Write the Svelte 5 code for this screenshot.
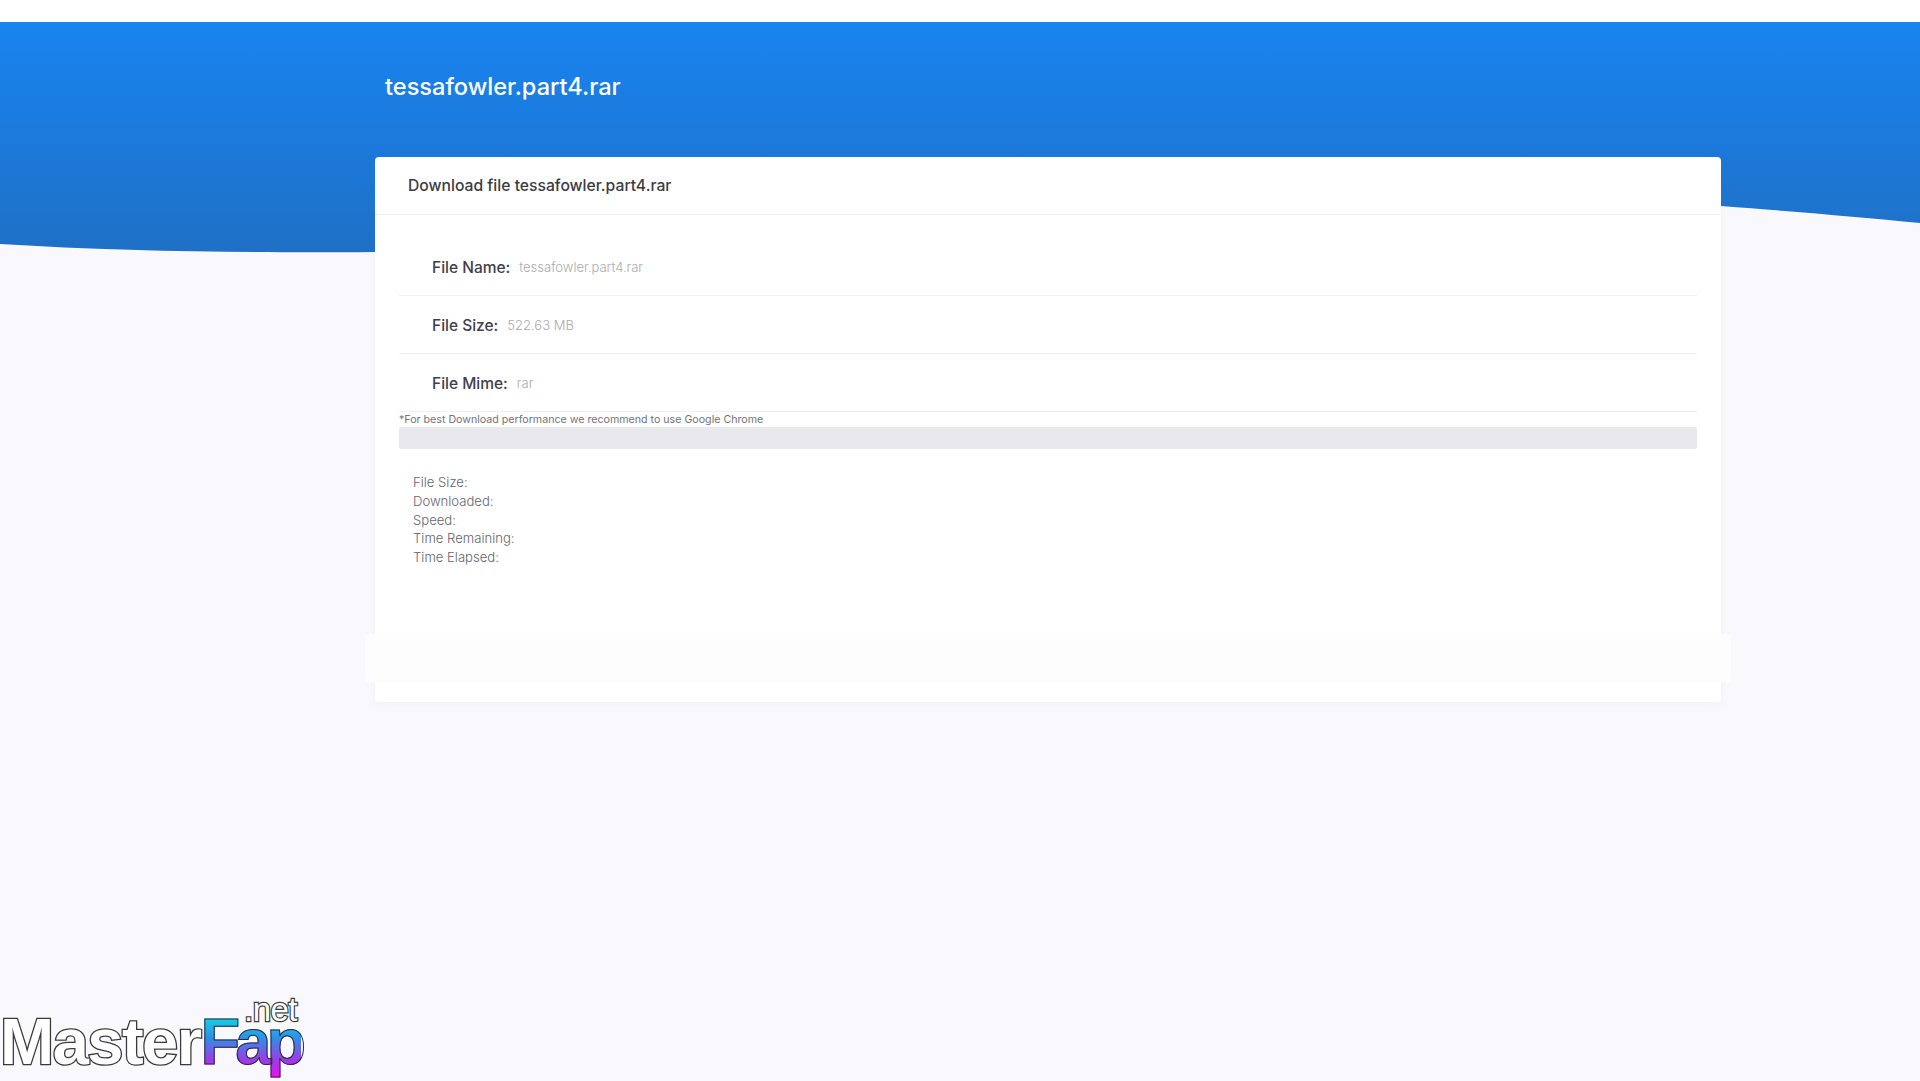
<script>
	const fileName = 'tessafowler.part4.rar';

	const details = [
		{ label: 'File Name:', value: fileName },
		{ label: 'File Size:', value: '522.63 MB' },
		{ label: 'File Mime:', value: 'rar' }
	];

	const stats = ['File Size:', 'Downloaded:', 'Speed:', 'Time Remaining:', 'Time Elapsed:'];
</script>

<div class="page">
	<div class="topbar"></div>

	<svg class="wave" viewBox="0 0 1920 240" preserveAspectRatio="none" aria-hidden="true">
		<defs>
			<linearGradient id="heroBlue" x1="0" y1="0" x2="0" y2="1">
				<stop offset="0" stop-color="#1884f0" />
				<stop offset="1" stop-color="#1f70c6" />
			</linearGradient>
		</defs>
		<path
			d="M0 222 C130 230 270 231 375 230 L1000 190 C1300 150 1560 172 1721 184 C1800 190 1860 195 1920 201 L1920 0 L0 0 Z"
			fill="url(#heroBlue)"
		/>
	</svg>

	<main class="content">
		<h1>{fileName}</h1>

		<section class="card">
			<header class="card-head">Download file {fileName}</header>

			<div class="card-body">
				{#each details as row (row.label)}
					<div class="detail">
						<span class="label">{row.label}</span>
						<span class="value">{row.value}</span>
					</div>
				{/each}

				<p class="note">*For best Download performance we recommend to use Google Chrome</p>
				<div class="progress"></div>

				<ul class="stats">
					{#each stats as stat (stat)}
						<li>{stat}</li>
					{/each}
				</ul>
			</div>

			<div class="strip"></div>
		</section>
	</main>

	<div class="logo">
		<span class="net">.net</span>
		<span class="master">Master</span><span class="fap">Fap</span>
	</div>
</div>

<style>
	:global(body) {
		background: #f9f8fd;
		font-family: 'Inter', 'Liberation Sans', sans-serif;
	}

	.page {
		position: relative;
		height: 1081px;
		overflow: hidden;
	}

	.topbar {
		height: 22px;
		background: #fff;
	}

	.wave {
		position: absolute;
		top: 22px;
		left: 0;
		width: 1920px;
		height: 240px;
	}

	.content {
		position: relative;
		padding: 0 199px 0 375px;
	}

	h1 {
		margin: 0;
		height: 135px;
		padding: 50px 0 0 10px;
		box-sizing: border-box;
		font-size: 23.6px;
		line-height: 30px;
		font-weight: 500;
		color: #fff;
	}

	.card {
		height: 545px;
		background: #fff;
		border-radius: 4px;
		box-shadow: 0 2px 12px rgba(120, 120, 170, 0.05);
		position: relative;
	}

	.card-head {
		height: 58px;
		padding-left: 33px;
		box-sizing: border-box;
		border-bottom: 1px solid #eeeef1;
		font-size: 15.7px;
		font-weight: 500;
		line-height: 58px;
		color: #3a3b44;
	}

	.card-body {
		padding: 23px 24px 0;
	}

	.detail {
		display: flex;
		align-items: center;
		gap: 9px;
		height: 58px;
		box-sizing: border-box;
		padding: 1px 0 0 33px;
		border-bottom: 1px solid #f0f0f3;
	}

	.label {
		font-size: 15.5px;
		font-weight: 500;
		color: #3f4049;
	}

	.value {
		font-size: 13px;
		font-weight: 300;
		color: #a9aab2;
	}

	.note {
		margin: 0;
		height: 15px;
		font-size: 10.65px;
		line-height: 15px;
		color: #72737c;
	}

	.progress {
		height: 22px;
		background: #e9e9ed;
		border-radius: 2px;
	}

	.stats {
		list-style: none;
		margin: 0;
		padding: 24px 0 0 14px;
		font-size: 13.1px;
		line-height: 18.8px;
		font-weight: 300;
		color: #64656e;
	}

	.strip {
		position: absolute;
		left: -10px;
		right: -10px;
		top: 477px;
		height: 48px;
		background: #fdfdfe;
		border-radius: 4px;
	}

	.logo {
		position: absolute;
		left: 0;
		bottom: 14px;
		font-family: 'Liberation Sans', sans-serif;
		font-weight: 700;
		font-size: 65px;
		line-height: 50px;
		letter-spacing: -1.5px;
		white-space: nowrap;
	}

	.master {
		color: #fff;
		-webkit-text-stroke: 2.6px #3a3a3a;
		paint-order: stroke fill;
	}

	.fap {
		letter-spacing: -5px;
		background: linear-gradient(180deg, #0fe0e0 12%, #2f8fe8 45%, #9a3ce8 75%, #f010f0 100%);
		-webkit-background-clip: text;
		background-clip: text;
		-webkit-text-fill-color: transparent;
		-webkit-text-stroke: 1px #2a2a3a;
	}

	.net {
		position: absolute;
		left: 244px;
		top: -19px;
		font-size: 33px;
		line-height: 24px;
		font-weight: 400;
		letter-spacing: -0.5px;
		color: #fff;
		-webkit-text-stroke: 2.4px #3a3a3a;
		paint-order: stroke fill;
	}
</style>
